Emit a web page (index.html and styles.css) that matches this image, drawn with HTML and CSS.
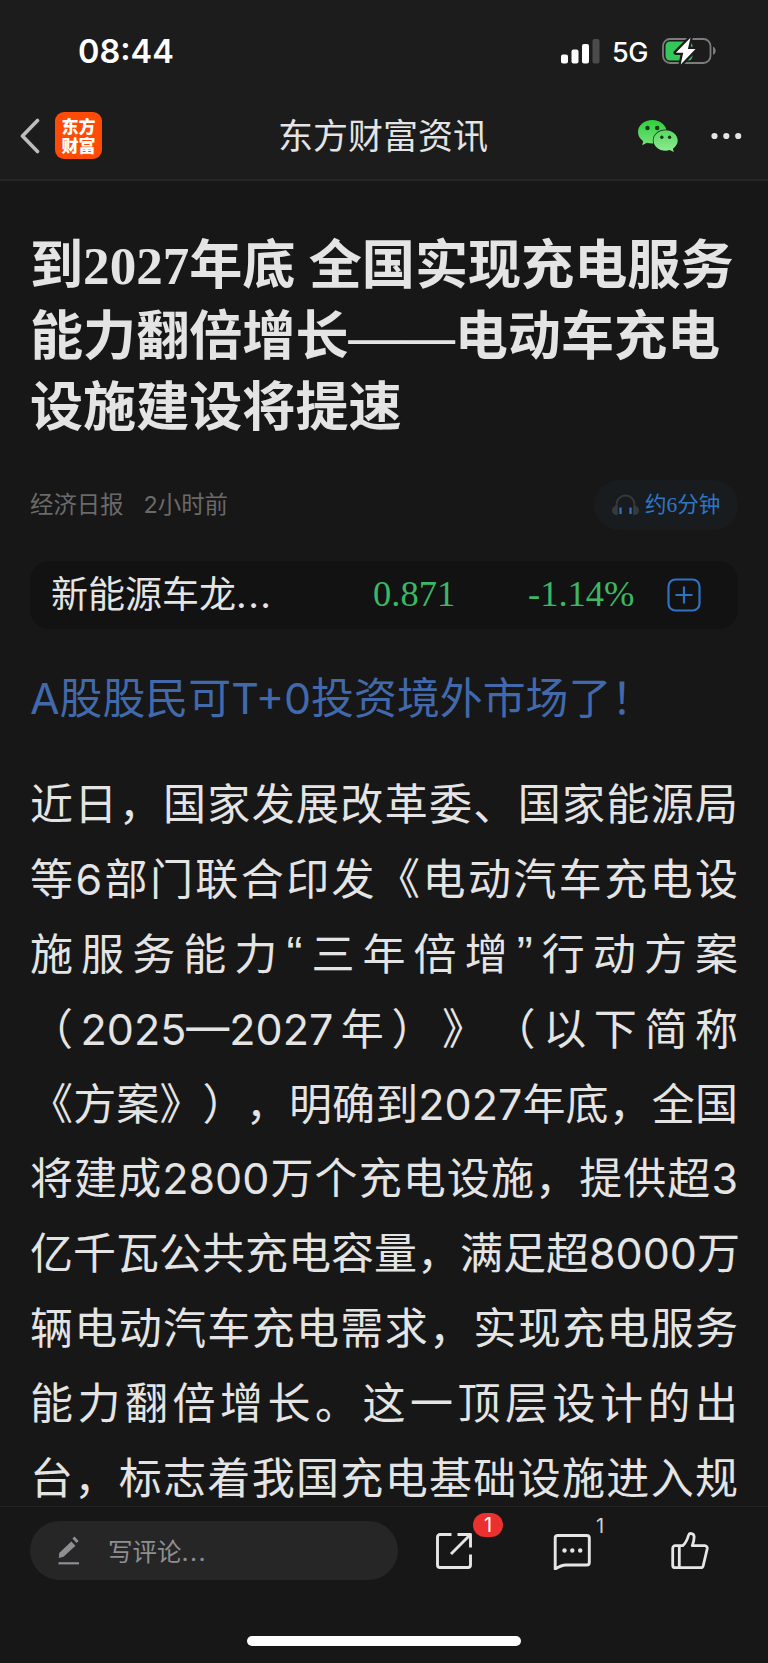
FILE: index.html
```html
<!DOCTYPE html>
<html lang="zh-CN">
<head>
    <meta charset="utf-8" />
    <title>东方财富资讯</title>
    <meta name="viewport" content="width=device-width, initial-scale=1" />
    <link rel="stylesheet" href="styles.css">
</head>
<body>
    <header class="top">
        <div class="status">
            <span class="time">08:44</span>
            <svg class="signal" width="39" height="25" viewBox="0 0 39 25">
                <rect x="0" y="15.5" width="7" height="9" rx="2" fill="#fff"/>
                <rect x="10.5" y="10.5" width="7" height="14" rx="2" fill="#fff"/>
                <rect x="21" y="5" width="7" height="19.5" rx="2" fill="#fff"/>
                <rect x="31.5" y="0" width="7" height="24.5" rx="2" fill="#4b4b4b"/>
            </svg>
            <span class="net">5G</span>
            <svg class="battery" width="55" height="28" viewBox="0 0 55 28">
                <rect x="1" y="2" width="47.5" height="24" rx="7" fill="none" stroke="#7c7c7c" stroke-width="1.8"/>
                <path d="M51 9.8c3.6 1 3.6 6.900 0 8z" fill="#7c7c7c"/>
                <rect x="3.500" y="4.500" width="27" height="19" rx="4.500" fill="#34c759"/>
                <path d="M28.500 0.800L13.800 15.700h7.400L18.700 27.500 33.500 12.100h-7.600z" fill="#fff" stroke="#1c1c1c" stroke-width="4.500" stroke-linejoin="round" paint-order="stroke"/>
            </svg>
        </div>
        <nav class="nav">
            <svg class="back" width="20" height="36" viewBox="0 0 20 36">
                <path d="M17.500 2.500L2.500 18l15 15.500" fill="none" stroke="#bdbdbd" stroke-width="3.600" stroke-linecap="round" stroke-linejoin="round"/>
            </svg>
            <div class="logo">东方<br>财富</div>
            <h2 class="nav-title">东方财富资讯</h2>
            <svg class="wechat" width="41" height="33" viewBox="0 0 41 33">
                <defs>
                    <linearGradient id="g1" x1="0" y1="0" x2="0" y2="1">
                        <stop offset="0" stop-color="#2fcf3c"/>
                        <stop offset="1" stop-color="#75e27c"/>
                    </linearGradient>
                    <linearGradient id="g2" x1="0" y1="0" x2="0" y2="1">
                        <stop offset="0" stop-color="#57d960"/>
                        <stop offset="1" stop-color="#90ea94"/>
                    </linearGradient>
                </defs>
                <path d="M14.300 0C6.400 0 0 5.300 0 12c0 3.700 2 7 5.200 9.200L4.200 25.200l4.800-2.500c1.700.5 3.400.8 5.300.8 7.900 0 14.300-5.300 14.300-11.700S22.200 0 14.300 0z" fill="url(#g1)"/>
                <path d="M27.500 10.300c-6.600 0-12 4.600-12 10.200s5.400 10.200 12 10.200c1.500 0 3-.2 4.300-.7l4 2-.9-3.300c2.900-1.900 4.800-4.900 4.800-8.200 0-5.600-5.500-10.200-12.200-10.200z" fill="url(#g2)" stroke="#1c1c1c" stroke-width="1.400" paint-order="stroke"/>
                <circle cx="9.500" cy="8" r="2.200" fill="#1c3a1e"/>
                <circle cx="19.200" cy="8" r="2.200" fill="#1c3a1e"/>
                <circle cx="23.800" cy="17.300" r="1.700" fill="#1c3a1e"/>
                <circle cx="31.600" cy="17.300" r="1.700" fill="#1c3a1e"/>
            </svg>
            <svg class="more" width="31" height="8" viewBox="0 0 31 8">
                <circle cx="3.500" cy="4" r="3.100" fill="#e4e4e4"/>
                <circle cx="15.300" cy="4" r="3.100" fill="#e4e4e4"/>
                <circle cx="27.200" cy="4" r="3.100" fill="#e4e4e4"/>
            </svg>
        </nav>
    </header>

    <main class="article">
        <h1>到2027年底 全国实现充电服务<br>能力翻倍增长——电动车充电<br>设施建设将提速</h1>

        <div class="meta">
            <span>经济日报</span>
            <span class="ago">2小时前</span>
            <div class="listen">
                <svg width="27" height="22" viewBox="0 0 27 22">
                    <path d="M4.500 13V10.500a9 9 0 0 1 18 0V13" fill="none" stroke="#373a3d" stroke-width="1.800"/>
                    <path d="M5.800 11.500v9.500C2.500 21.500 0 19.500 0 16.500s2.500-5 5.800-5zM21.200 11.500v9.500c3.300.5 5.800-1.500 5.800-4.500s-2.500-5-5.800-5z" fill="#373a3d"/>
                    <path d="M8.500 13.500v6.500M18.500 13.500v6.500" stroke="#2f76c8" stroke-width="2.200"/>
                </svg>
                <span>约6分钟</span>
            </div>
        </div>

        <div class="stock">
            <span class="stock-name">新能源车龙<i>...</i></span>
            <span class="price">0.871</span>
            <span class="rate">-1.14%</span>
            <svg width="34" height="34" viewBox="0 0 34 34">
                <rect x="1.500" y="1.500" width="31" height="31" rx="7" fill="none" stroke="#2f72c4" stroke-width="2.200"/>
                <path d="M17 8.500v17M8.500 17h17" stroke="#2f72c4" stroke-width="2.200"/>
            </svg>
        </div>

        <a class="promo">A股股民可T+0投资境外市场了！</a>

        <p class="content">近日，国家发展改革委、国家能源局<br>等6部门联合印发《电动汽车充电设<br>施服务能力<span class="quote">“</span>三年倍增<span class="quote">”</span>行动方案<br>（2025—2027年）》（以下简称<br>《方案》），明确到2027年底，全国<br>将建成2800万个充电设施，提供超3<br>亿千瓦公共充电容量，满足超8000万<br>辆电动汽车充电需求，实现充电服务<br>能力翻倍增长。这一顶层设计的出<br>台，标志着我国充电基础设施进入规</p>
    </main>

    <footer class="bottom">
        <div class="tools">
            <div class="comment">
                <svg width="22" height="29" viewBox="0 0 22 29">
                    <path d="M13.300 5.500l4.200 4.200L5.500 20.800.8 22l.4-5z" fill="#8e8e93"/>
                    <path d="M14.400 2.600L16.500.5l4.200 4.600-2.200 2z" fill="#8e8e93"/>
                    <path d="M.5 27.300h20.500" stroke="#8e8e93" stroke-width="2.200"/>
                </svg>
                <span>写评论<i>...</i></span>
            </div>
            <div class="tool">
                <svg width="38" height="38" viewBox="0 0 38 38">
                    <path d="M16.500 2.500H5a2.500 2.500 0 0 0-2.500 2.500v28A2.500 2.500 0 0 0 5 35.500h28a2.500 2.500 0 0 0 2.500-2.500V22.500M22.500 2.500h13v13M35 3L16 22" fill="none" stroke="#e6e6e6" stroke-width="2.900" stroke-linejoin="round"/>
                </svg>
                <span class="badge">1</span>
            </div>
            <div class="tool">
                <svg width="38" height="38" viewBox="0 0 38 38">
                    <path d="M4.300 3.500h29.500a2.500 2.500 0 0 1 2.500 2.500v24.500a2.500 2.500 0 0 1-2.500 2.500H13c-4 0-7 1.500-10.800 4V6a2.500 2.500 0 0 1 2.100-2.500z" fill="none" stroke="#e6e6e6" stroke-width="2.900" stroke-linejoin="round"/>
                    <circle cx="11.500" cy="18.500" r="2.200" fill="#e6e6e6"/>
                    <circle cx="19.300" cy="18.500" r="2.200" fill="#e6e6e6"/>
                    <circle cx="27.200" cy="18.500" r="2.200" fill="#e6e6e6"/>
                </svg>
                <span class="count">1</span>
            </div>
            <div class="tool">
                <svg width="38" height="38" viewBox="0 0 38 38">
                    <path d="M4.200 13.700h7.500C15 11 16.500 7 17.600 3c.6-2.400 5.200-1.800 5.500 1.400.2 3-.6 6-1.800 9.300h12.500a2.500 2.500 0 0 1 2.400 3l-4 17a2.500 2.500 0 0 1-2.400 2H4.200a2.500 2.500 0 0 1-2.500-2.500V16.200a2.500 2.500 0 0 1 2.500-2.500zM8.300 13.700v22" fill="none" stroke="#e6e6e6" stroke-width="2.800" stroke-linejoin="round"/>
                </svg>
            </div>
        </div>
        <div class="home"></div>
    </footer>
</body>
</html>
```

FILE: styles.css
```css
* {
    box-sizing: border-box;
}

body {
    margin: 0;
    height: 1663px;
    display: flex;
    flex-direction: column;
    overflow: hidden;
    background-color: #171717;
    color: #e4e4e4;
    font-family: Inter, "Noto Sans CJK SC", sans-serif;
    text-spacing-trim: space-all;
}

svg {
    display: block;
    flex: none;
}

/* status bar + nav */
.top {
    height: 181px;
    flex: none;
    background-color: #1c1c1c;
    border-bottom: 2px solid #252525;
}

.status {
    height: 102px;
    padding: 0 51px 0 78px;
    display: flex;
    align-items: center;
    color: #fff;
}

.time {
    font-size: 32.500px;
    font-weight: 600;
    flex: 1;
}

.net {
    width: 36px;
    margin: 2px 14px 0 12px;
    font-size: 27px;
    font-weight: 500;
    letter-spacing: -0.500px;
}

.nav {
    height: 68px;
    padding: 0 26px 0 20px;
    display: flex;
    align-items: center;
}

.logo {
    width: 47px;
    height: 47px;
    margin: -1px 0 0 15px;
    padding-top: 4px;
    border-radius: 9px;
    background-color: #ff4b05;
    color: #fff;
    font: 900 17px/19px "Noto Sans CJK SC", sans-serif;
    text-align: center;
}

.nav-title {
    flex: 1;
    margin: 0 0 0 26px;
    padding-left: 150px;
    font-size: 35px;
    font-weight: 400;
    line-height: 48px;
}

.more {
    margin-left: 32px;
}

/* article */
.article {
    flex: 1;
    padding: 50px 30px 0;
    overflow: hidden;
}

h1 {
    margin: 0;
    font-family: "Liberation Serif", "Noto Sans CJK SC", serif;
    font-size: 53.100px;
    font-weight: 700;
    line-height: 70.800px;
    white-space: nowrap;
}

.meta {
    margin-top: 37px;
    height: 50px;
    display: flex;
    align-items: center;
    font-size: 23.400px;
    line-height: 30px;
    color: #6a6a6a;
}

.ago {
    margin-left: 20px;
    flex: 1;
}

.listen {
    width: 144px;
    height: 50px;
    padding-left: 18px;
    border-radius: 25px;
    background-color: #181c1f;
    color: #2f76c8;
    display: flex;
    align-items: center;
    gap: 6px;
    font-family: "Liberation Serif", "Noto Sans CJK SC", serif;
    font-size: 21.500px;
    white-space: nowrap;
}

.stock {
    margin-top: 31px;
    height: 68px;
    padding: 0 37px 0 21px;
    border-radius: 20px;
    background-color: #121212;
    display: flex;
    align-items: center;
    font-size: 37px;
    white-space: nowrap;
}

.stock svg {
    margin-top: -1px;
}

.stock-name {
    width: 322px;
    line-height: 66px;
}

i {
    font-style: normal;
    letter-spacing: 1.500px;
}

.price, .rate {
    font-family: "Liberation Serif", serif;
    font-size: 36.500px;
    line-height: 40px;
    padding-bottom: 2px;
    color: #3cb766;
}

.price {
    width: 155px;
}

.rate {
    flex: 1;
}

.promo {
    display: block;
    margin-top: 38px;
    font-size: 42.900px;
    line-height: 62px;
    color: #4169ab;
    white-space: nowrap;
}

.content {
    margin: 38px 0 0;
    font-size: 43px;
    line-height: 74.800px;
    text-align: justify;
    text-align-last: justify;
    white-space: nowrap;
}

.quote {
    padding: 0 1px;
    font-family: "Liberation Sans", sans-serif;
    font-size: 48px;
    line-height: 0;
}

/* bottom bar */
.bottom {
    height: 157px;
    flex: none;
    background-color: #171717;
    border-top: 1px solid #232323;
}

.tools {
    height: 86px;
    padding: 0 30px;
    display: flex;
    align-items: center;
}

.comment {
    width: 368px;
    height: 59px;
    flex: none;
    padding-left: 28px;
    border-radius: 30px;
    background-color: #262626;
    color: #8e8e93;
    display: flex;
    align-items: center;
    gap: 28px;
    font-size: 24.500px;
}

.tool {
    position: relative;
    flex: none;
    width: 38px;
    margin: 1px 42px 0 37px;
}

.tool + .tool {
    margin-left: 38px;
}

.tool:last-child {
    margin-right: 0;
}

.badge, .count {
    position: absolute;
    font-size: 20px;
    line-height: 24px;
    text-align: center;
}

.badge {
    left: 38px;
    top: -19px;
    width: 30px;
    border-radius: 12px;
    background-color: #eb3030;
    color: #fff;
}

.count {
    left: 43px;
    top: -18px;
    color: #d0d0d0;
}

.home {
    width: 274px;
    height: 10px;
    margin: 43px auto 0;
    border-radius: 5px;
    background-color: #fff;
}
```
